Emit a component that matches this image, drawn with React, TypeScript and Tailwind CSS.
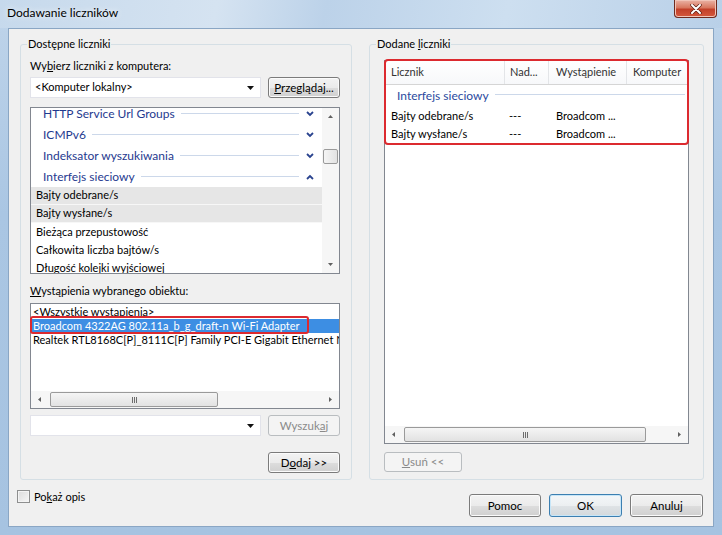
import React from "react";

const FONT = "font-['Lato','Noto_Sans',sans-serif]";

type Dir = "up" | "down" | "left" | "right";

function Tri({ dir, color = "#606060" }: { dir: Dir; color?: string }) {
  const vert = dir === "up" || dir === "down";
  const pts = {
    up: "0,3 2.5,0 5,3",
    down: "0,0 5,0 2.5,3",
    left: "3,0 3,5 0,2.5",
    right: "0,0 0,5 3,2.5",
  }[dir];
  return (
    <svg width={vert ? 5 : 3} height={vert ? 3 : 5} viewBox={vert ? "0 0 5 3" : "0 0 3 5"}>
      <polygon points={pts} fill={color} />
    </svg>
  );
}

function ComboArrow() {
  return (
    <svg width="7" height="4" viewBox="0 0 7 4">
      <polygon points="0,0 7,0 3.5,4" fill="#111" />
    </svg>
  );
}

function Chevron({ up }: { up?: boolean }) {
  return (
    <svg width="8" height="6" viewBox="0 0 8 6">
      <path
        d={up ? "M1 5 L4 2 L7 5" : "M1 1 L4 4 L7 1"}
        fill="none"
        stroke="#2a438f"
        strokeWidth="1.8"
      />
    </svg>
  );
}

function Grip() {
  return (
    <div className="flex flex-row gap-[1px]">
      {[0, 1, 2].map((i) => (
        <div key={i} className="h-[6px] w-px bg-[#6d6d6d]" />
      ))}
    </div>
  );
}

function Btn({
  children,
  className = "",
  disabled,
  def,
}: {
  children: React.ReactNode;
  className?: string;
  disabled?: boolean;
  def?: boolean;
}) {
  const look = disabled
    ? "border-[#b9bdc0] bg-[#f4f4f4] text-[#8a8a8a]"
    : def
      ? "border-[#3c7fb1] bg-[linear-gradient(to_bottom,#f4f7f9_0%,#eceff1_50%,#dfe3e6_51%,#d4d9dc_100%)] shadow-[inset_0_0_0_1px_#c7e6f8] text-black"
      : "border-[#7b7b7b] bg-[linear-gradient(to_bottom,#f3f3f3_0%,#ebebeb_50%,#dddddd_51%,#d0d0d0_100%)] shadow-[inset_0_0_0_1px_#fbfbfb] text-black";
  return (
    <button className={`flex shrink-0 items-center justify-center rounded-[3px] border text-[11.5px] font-normal leading-none ${look} ${className}`}>
      {children}
    </button>
  );
}

function Combo({ text }: { text?: string }) {
  return (
    <div className="flex h-[21px] min-w-0 flex-1 items-center border border-[#e2e3ea] bg-white pl-[4px] pr-[6px]">
      <span className="flex-1 truncate">{text}</span>
      <ComboArrow />
    </div>
  );
}

function HScroll({ thumbLeft, thumbWidth }: { thumbLeft: string; thumbWidth: string }) {
  return (
    <div className="flex h-[17px] shrink-0 items-center bg-[#f6f6f6]">
      <div className="flex h-full w-[17px] items-center justify-center">
        <Tri dir="left" />
      </div>
      <div className="flex h-full flex-1 items-center">
        <div
          className={`${thumbLeft} ${thumbWidth} flex h-[15px] items-center justify-center rounded-[2px] border border-[#9a9a9a] bg-[linear-gradient(to_bottom,#f5f5f5,#e2e2e2)]`}
        >
          <Grip />
        </div>
      </div>
      <div className="flex h-full w-[17px] items-center justify-center">
        <Tri dir="right" />
      </div>
    </div>
  );
}

function VScroll() {
  return (
    <div className="flex w-[17px] shrink-0 flex-col items-center bg-[#f6f6f6]">
      <div className="flex h-[17px] w-full items-center justify-center">
        <Tri dir="up" />
      </div>
      <div className="flex w-full flex-1 flex-col items-center">
        <div className="mt-[24px] h-[15px] w-[15px] rounded-[2px] border border-[#9a9a9a] bg-[linear-gradient(to_right,#f5f5f5,#e2e2e2)]" />
      </div>
      <div className="flex h-[17px] w-full items-center justify-center">
        <Tri dir="down" />
      </div>
    </div>
  );
}

const categories = [
  { name: "HTTP Service Url Groups" },
  { name: "ICMPv6" },
  { name: "Indeksator wyszukiwania" },
  { name: "Interfejs sieciowy", open: true },
];

const counters = [
  { name: "Bajty odebrane/s", sel: true },
  { name: "Bajty wysłane/s", sel: true },
  { name: "Bieżąca przepustowość" },
  { name: "Całkowita liczba bajtów/s" },
  { name: "Długość kolejki wyjściowej" },
];

const instances = [
  "<Wszystkie wystąpienia>",
  "Broadcom 4322AG 802.11a_b_g_draft-n Wi-Fi Adapter",
  "Realtek RTL8168C[P]_8111C[P] Family PCI-E Gigabit Ethernet NIC (NDIS 6.20)",
];

const added = [
  { name: "Bajty odebrane/s", parent: "---", inst: "Broadcom ..." },
  { name: "Bajty wysłane/s", parent: "---", inst: "Broadcom ..." },
];

export default function App() {
  return (
    <div
      className={`${FONT} flex h-[535px] w-[722px] flex-col overflow-hidden bg-[linear-gradient(to_bottom,#cbdcee_0%,#bcd2e9_6%,#aac6e3_40%,#a6c3e1_100%)] text-[11px] text-black`}
    >
      {/* title bar */}
      <div className="flex h-[28px] shrink-0 items-start justify-between bg-[linear-gradient(100deg,#c6d9ec_0%,#d5e3f1_30%,#bcd2e9_45%,#cddff0_70%,#b9d0e8_100%)]">
        <span className="pl-[7px] pt-[4px] text-[12px] leading-[17px] [text-shadow:0_0_6px_#ffffff]">
          Dodawanie liczników
        </span>
        <div className="mr-[5px] flex h-[18px] w-[43px] items-center justify-center rounded-b-[4px] border border-t-0 border-[#6e2a1f] bg-[linear-gradient(to_bottom,#eab3a6_0%,#d8775f_45%,#c2402a_55%,#d4583d_100%)] shadow-[inset_0_0_0_1px_#f1c4b8]">
          <svg width="12" height="10" viewBox="0 0 12 10">
            <path d="M2 1 L10 9 M10 1 L2 9" stroke="#5a1d14" strokeWidth="3.4" strokeLinecap="round" />
            <path d="M2 1 L10 9 M10 1 L2 9" stroke="#ffffff" strokeWidth="2" strokeLinecap="round" />
          </svg>
        </div>
      </div>

      {/* frame */}
      <div className="flex flex-1 flex-col px-[8px] pb-[8px]">
        <div className="flex flex-1 flex-col border border-[#8aa6c4] bg-[#f0f0f0]">
          {/* groups */}
          <div className="flex gap-[17px] pl-[11px] pr-[9px] pt-[7px]">
            {/* left group */}
            <fieldset className="h-[444px] w-[332px] min-w-0 shrink-0 rounded-[3px] border border-[#d5dfe5] pb-[7px] pl-[9px] pr-[11px]">
              <legend className="-ml-[3px] px-[1px] leading-[16px]">Dostępne liczniki</legend>
              <div className="flex flex-col">
                <div className="mt-[6px] leading-[16px]">
                  Wy<u>b</u>ierz liczniki z komputera:
                </div>
                <div className="mt-[3px] flex items-center gap-[7px]">
                  <Combo text="<Komputer lokalny>" />
                  <Btn className="h-[21px] w-[72px]">
                    <span>
                      <u>P</u>rzeglądaj...
                    </span>
                  </Btn>
                </div>

                {/* counters list */}
                <div className="mt-[9px] flex h-[167px] border border-[#828790] bg-white">
                  <div className="flex min-w-0 flex-1 flex-col overflow-hidden">
                    <div className="-mt-[5px] flex flex-col">
                      {categories.map((c) => (
                        <div key={c.name} className="flex h-[21px] shrink-0 items-center pl-[12px] pr-[8px]">
                          <span className="text-[12px] text-[#1f3a8f]">{c.name}</span>
                          <div className="ml-[6px] mr-[7px] h-px flex-1 bg-[#ccd8ea]" />
                          <Chevron up={c.open} />
                        </div>
                      ))}
                      {counters.map((c) => (
                        <div
                          key={c.name}
                          className={`flex h-[18px] shrink-0 items-center pl-[5px] ${c.sel ? "border-b border-[#f7f7f7] bg-[#e6e6e6]" : ""}`}
                        >
                          {c.name}
                        </div>
                      ))}
                    </div>
                  </div>
                  <VScroll />
                </div>

                <div className="mt-[9px] leading-[16px]">
                  <u>W</u>ystąpienia wybranego obiektu:
                </div>

                {/* instances list */}
                <div className="relative mt-[4px] flex h-[106px] min-w-0 flex-col border border-[#828790] bg-white">
                  <div className="flex min-w-0 flex-1 flex-col overflow-hidden pt-[1px]">
                    {instances.map((t, i) => (
                      <div
                        key={t}
                        className={`flex h-[14px] shrink-0 items-center overflow-hidden whitespace-nowrap pl-[2px] leading-[14px] ${i === 1 ? "bg-[#3d8ee3] text-white" : ""}`}
                      >
                        {t}
                      </div>
                    ))}
                  </div>
                  <HScroll thumbLeft="ml-[2px]" thumbWidth="w-[168px]" />
                  <div className="absolute -left-[1px] top-[12px] h-[18px] w-[279px] rounded-[3px] border-[2.5px] border-[#dc2a2f]" />
                </div>

                <div className="mt-[6px] flex items-center gap-[7px]">
                  <Combo />
                  <Btn disabled className="h-[21px] w-[72px]">
                    <span>
                      Wyszuk<u>a</u>j
                    </span>
                  </Btn>
                </div>

                <div className="mt-[16px] flex justify-end">
                  <Btn className="h-[21px] w-[72px]">
                    <span>
                      D<u>o</u>daj &gt;&gt;
                    </span>
                  </Btn>
                </div>
              </div>
            </fieldset>

            {/* right group */}
            <fieldset className="h-[444px] w-[335px] min-w-0 shrink-0 rounded-[3px] border border-[#d5dfe5] pb-[7px] pl-[14px] pr-[14px]">
              <legend className="-ml-[8px] px-[1px] leading-[16px]">
                Dodane <u>l</u>iczniki
              </legend>
              <div className="flex flex-col">
                <div className="relative mt-[8px] flex h-[384px] flex-col border border-[#828790] bg-white">
                  <div className="flex h-[24px] shrink-0 border-b border-[#d5d5d5] bg-[linear-gradient(to_bottom,#ffffff,#f7f8fa)] text-[#333]">
                    <div className="flex w-[120px] shrink-0 items-center border-r border-[#e3e5e8] pl-[6px]">Licznik</div>
                    <div className="flex w-[44px] shrink-0 items-center border-r border-[#e3e5e8] pl-[5px]">Nad...</div>
                    <div className="flex w-[78px] shrink-0 items-center border-r border-[#e3e5e8] pl-[7px]">Wystąpienie</div>
                    <div className="flex flex-1 items-center overflow-hidden pl-[6px]">Komputer</div>
                  </div>
                  <div className="flex h-[22px] shrink-0 items-center pl-[12px]">
                    <span className="text-[12px] text-[#2b4a9e]">Interfejs sieciowy</span>
                    <div className="ml-[6px] mr-[3px] -mt-[3px] h-px flex-1 bg-[#ccd8ea]" />
                  </div>
                  {added.map((r) => (
                    <div key={r.name} className="flex h-[18px] shrink-0 items-center">
                      <div className="w-[120px] shrink-0 pl-[6px]">{r.name}</div>
                      <div className="w-[44px] shrink-0 pl-[4px]">{r.parent}</div>
                      <div className="w-[78px] shrink-0 pl-[7px]">{r.inst}</div>
                    </div>
                  ))}
                  <div className="flex-1" />
                  <HScroll thumbLeft="ml-[2px]" thumbWidth="w-[242px]" />
                  <div className="absolute -left-[1px] -right-[1px] -top-[2px] h-[86px] rounded-[4px] border-[2.5px] border-[#dc2a2f]" />
                </div>
                <div className="mt-[8px] flex">
                  <Btn disabled className="h-[20px] w-[78px]">
                    <span>
                      <u>U</u>suń &lt;&lt;
                    </span>
                  </Btn>
                </div>
              </div>
            </fieldset>
          </div>

          {/* bottom row */}
          <div className="mt-[10px] flex items-start pl-[8px] pr-[10px]">
            <div className="flex items-center gap-[4px]">
              <div className="h-[13px] w-[13px] border border-[#8e8f8f] bg-[linear-gradient(135deg,#dcdcdc,#f6f6f6)] shadow-[inset_0_0_0_1px_#f4f4f4]" />
              <span className="leading-[13px]">
                Po<u>k</u>aż opis
              </span>
            </div>
            <div className="mt-[4px] ml-auto flex gap-[8px]">
              <Btn className="h-[23px] w-[72px]">Pomoc</Btn>
              <Btn def className="h-[23px] w-[73px]">
                OK
              </Btn>
              <Btn className="h-[23px] w-[73px]">Anuluj</Btn>
            </div>
          </div>
        </div>
      </div>
    </div>
  );
}
